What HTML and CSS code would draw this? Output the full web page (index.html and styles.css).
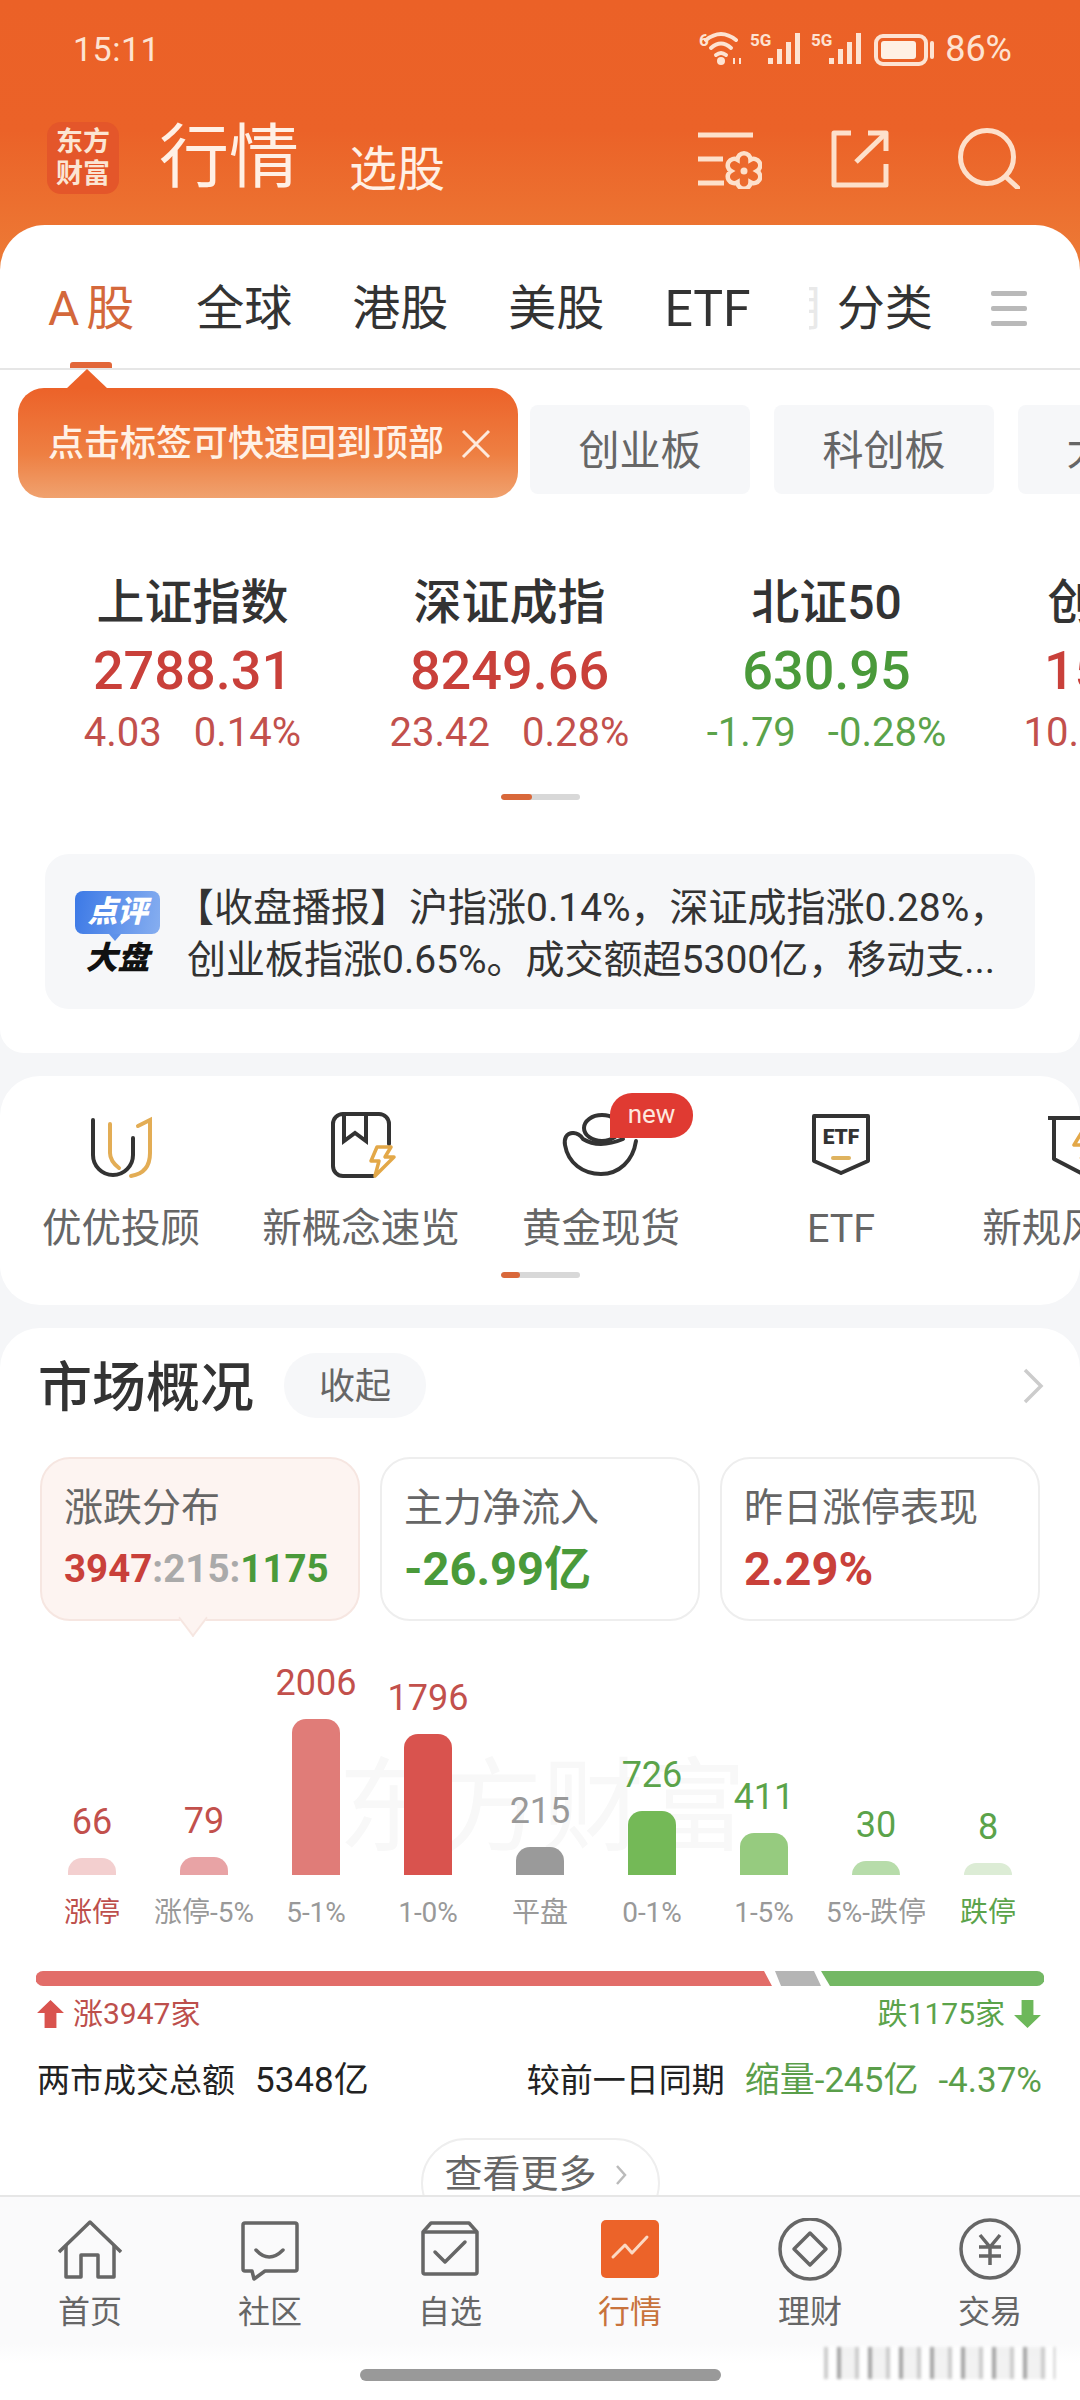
FILE: index.html
```html
<!DOCTYPE html>
<html lang="zh-CN">
<head>
  <meta charset="UTF-8">
  <meta name="viewport" content="width=device-width, initial-scale=1.0">
  <title>行情</title>
  <link rel="stylesheet" href="styles.css">
</head>
<body>
<div class="page">
  <div class="scroll">
    <div class="status">
      <span class="time">15:11</span>
      <div class="status-right">
        <svg class="status-icons" width="240" height="40" viewBox="0 0 240 40">
          <text class="st-txt" x="1" y="17">6</text>
          <g fill="none" stroke="#fde3d2" stroke-width="4" stroke-linecap="round">
            <path d="M8 11Q23-1 38 11"/>
            <path d="M13 19Q23 10 33 19"/>
            <path d="M18 26Q23 22 28 26"/>
          </g>
          <circle cx="23" cy="32" r="4" fill="#fde3d2"/>
          <path d="M36 29v6M42 29v6" stroke="#fde3d2" stroke-width="2"/>
          <text class="st-txt" x="52" y="17">5G</text>
          <g fill="#fde3d2">
            <rect x="70" y="29" width="5" height="6"/><rect x="79" y="20" width="5" height="15"/><rect x="88" y="13" width="5" height="22"/><rect x="97" y="4" width="5" height="31"/>
          </g>
          <text class="st-txt" x="113" y="17">5G</text>
          <g fill="#fde3d2">
            <rect x="131" y="29" width="5" height="6"/><rect x="140" y="20" width="5" height="15"/><rect x="149" y="13" width="5" height="22"/><rect x="158" y="4" width="5" height="31"/>
          </g>
          <rect x="178" y="7" width="50" height="28" rx="7" fill="none" stroke="#fde3d2" stroke-width="4"/>
          <rect x="183" y="12" width="35" height="18" rx="3" fill="#fff0e4"/>
          <rect x="232" y="12" width="4" height="18" rx="2" fill="#fde3d2"/>
        </svg>
        <span class="batt">86%</span>
      </div>
    </div>

    <div class="head">
      <div class="logo">东方<br>财富</div>
      <div class="head-title">行情</div>
      <div class="head-sub">选股</div>
      <div class="head-icons">
        <svg width="64" height="62" viewBox="0 0 64 62" fill="none" stroke="#fde0cb" stroke-width="5">
          <path d="M0 8H55M0 32H25M0 56H26"/>
          <path stroke-width="4.5" d="M59 44A6.5 6.5 0 0 1 52.5 55.26A6.5 6.5 0 0 1 39.5 55.26A6.5 6.5 0 0 1 33 44A6.5 6.5 0 0 1 39.5 32.74A6.5 6.5 0 0 1 52.5 32.74A6.5 6.5 0 0 1 59 44Z"/>
          <circle cx="46" cy="44" r="3.5" fill="#fde0cb" stroke="none"/>
        </svg>
        <svg width="58" height="62" viewBox="0 0 58 62" fill="none" stroke="#fde0cb" stroke-width="5" stroke-linejoin="round">
          <path d="M20 6H3V58H55V37"/>
          <path d="M25 35L54 7"/>
          <path d="M37 6H55V24"/>
        </svg>
        <svg width="62" height="62" viewBox="0 0 62 62" fill="none" stroke="#fde0cb" stroke-width="5" stroke-linecap="round">
          <circle cx="29" cy="30" r="26.5"/>
          <path d="M48 50L60 61"/>
        </svg>
      </div>
    </div>

    <div class="sheet">
      <div class="tabs">
        <div class="tab active"><span class="tab-a">A</span>股</div>
        <div class="tab">全球</div>
        <div class="tab">港股</div>
        <div class="tab">美股</div>
        <div class="tab tab-etf">ETF</div>
        <div class="tab-fade">期</div>
        <div class="tab tab-last">分类</div>
        <div class="tab-menu"><i></i><i></i><i></i></div>
      </div>

      <div class="chips-wrap">
        <div class="chips">
          <div class="chip">创业板</div>
          <div class="chip">科创板</div>
          <div class="chip">大盘股</div>
        </div>
        <div class="tip">
          <span>点击标签可快速回到顶部</span>
          <svg width="30" height="30" viewBox="0 0 30 30" stroke="#fdeadd" stroke-width="3" fill="none"><path d="M2 2L28 28M28 2L2 28"/></svg>
        </div>
      </div>

      <div class="indexes">
        <div class="idx">
          <div class="idx-name">上证指数</div>
          <div class="idx-price up">2788.31</div>
          <div class="idx-sub up-s"><span>4.03</span><span>0.14%</span></div>
        </div>
        <div class="idx">
          <div class="idx-name">深证成指</div>
          <div class="idx-price up">8249.66</div>
          <div class="idx-sub up-s"><span>23.42</span><span>0.28%</span></div>
        </div>
        <div class="idx">
          <div class="idx-name">北证50</div>
          <div class="idx-price down">630.95</div>
          <div class="idx-sub down-s"><span>-1.79</span><span>-0.28%</span></div>
        </div>
        <div class="idx">
          <div class="idx-name">创业板指</div>
          <div class="idx-price up">1590.72</div>
          <div class="idx-sub up-s"><span>10.28</span><span>0.65%</span></div>
        </div>
      </div>
      <div class="pager p1"><i></i></div>

      <div class="news">
        <div class="news-logo">
          <div class="bubble">点评</div>
          <div class="news-big">大盘</div>
        </div>
        <div class="news-txt"><span class="news-br">【</span>收盘播报】沪指涨0.14%，深证成指涨0.28%，<br>创业板指涨0.65%。成交额超5300亿，移动支...</div>
      </div>
    </div>

    <div class="card entry">
      <div class="entries">
        <div class="ent">
          <svg width="72" height="72" viewBox="0 0 72 72" fill="none" stroke-width="4" stroke-linecap="round">
            <path stroke="#333" d="M8 11V46A20 20 0 0 0 48 46V29"/>
            <path stroke="#e3ad55" d="M25 15V44Q25 52 34 59"/>
            <path stroke="#e3ad55" d="M53 17L65 11V44Q65 64 46 67"/>
          </svg>
          <div class="ent-name">优优投顾</div>
        </div>
        <div class="ent">
          <svg width="72" height="72" viewBox="0 0 72 72" fill="none" stroke-width="4" stroke-linecap="round">
            <path stroke="#333" d="M64 35V15A10 10 0 0 0 54 5H18A10 10 0 0 0 8 15V57A10 10 0 0 0 18 67H48"/>
            <path stroke="#333" d="M19 5V32L30 24L41 32V5"/>
            <path stroke="#e3a848" stroke-width="3.5" stroke-linejoin="round" d="M52 38H66L60 48H69L50 67L54 52H46Z"/>
          </svg>
          <div class="ent-name">新概念速览</div>
        </div>
        <div class="ent">
          <svg width="80" height="72" viewBox="0 0 80 72" fill="none" stroke="#333" stroke-width="4" stroke-linecap="round">
            <path d="M12 24C5 24 3 30 4 36C7 54 22 65 40 65C58 65 72 52 75 32"/>
            <path d="M12 24Q18 24 22 30Q38 40 62 30"/>
            <ellipse cx="41" cy="19" rx="18" ry="13"/>
          </svg>
          <span class="badge">new</span>
          <div class="ent-name">黄金现货</div>
        </div>
        <div class="ent">
          <svg width="72" height="72" viewBox="0 0 72 72" fill="none" stroke="#333" stroke-width="4" stroke-linejoin="round">
            <path d="M9 7H63V52L36 64L9 52Z"/>
            <text class="etf-txt" x="36" y="35">ETF</text>
            <path stroke="#dfb35f" stroke-linecap="round" d="M28 49H44"/>
          </svg>
          <div class="ent-name">ETF</div>
        </div>
        <div class="ent">
          <svg width="72" height="72" viewBox="0 0 72 72" fill="none" stroke="#333" stroke-width="4" stroke-linejoin="round">
            <path d="M3 9H69M9 9V50L36 64L63 50V9"/>
            <path stroke="#e3a848" stroke-width="3.5" d="M40 18L29 36H42L36 50"/>
          </svg>
          <div class="ent-name">新规风向标</div>
        </div>
      </div>
      <div class="pager p2"><i></i></div>
    </div>

    <div class="card market">
      <div class="mk-head">
        <div class="mk-title">市场概况</div>
        <div class="mk-pill">收起</div>
        <svg class="mk-arrow" width="22" height="36" viewBox="0 0 22 36" fill="none" stroke="#ccc" stroke-width="3.5"><path d="M3 2L19 18L3 34"/></svg>
      </div>

      <div class="stats">
        <div class="stat on">
          <div class="stat-name">涨跌分布</div>
          <div class="stat-val small"><span class="r">3947</span><span class="g">:215:</span><span class="n">1175</span></div>
        </div>
        <div class="stat">
          <div class="stat-name">主力净流入</div>
          <div class="stat-val n">-26.99亿</div>
        </div>
        <div class="stat">
          <div class="stat-name">昨日涨停表现</div>
          <div class="stat-val r">2.29%</div>
        </div>
      </div>

      <div class="chart">
        <div class="wm">东方财富</div>
        <div class="col"><div class="v vr">66</div><div class="bar b1" style="height:17px"></div><div class="l lr">涨停</div></div>
        <div class="col"><div class="v vr">79</div><div class="bar b2" style="height:18px"></div><div class="l">涨停-5%</div></div>
        <div class="col"><div class="v vr">2006</div><div class="bar b3" style="height:156px"></div><div class="l">5-1%</div></div>
        <div class="col"><div class="v vr">1796</div><div class="bar b4" style="height:141px"></div><div class="l">1-0%</div></div>
        <div class="col"><div class="v vn">215</div><div class="bar b5" style="height:28px"></div><div class="l">平盘</div></div>
        <div class="col"><div class="v vg">726</div><div class="bar b6" style="height:64px"></div><div class="l">0-1%</div></div>
        <div class="col"><div class="v vg">411</div><div class="bar b7" style="height:42px"></div><div class="l">1-5%</div></div>
        <div class="col"><div class="v vg">30</div><div class="bar b8" style="height:14px"></div><div class="l">5%-跌停</div></div>
        <div class="col"><div class="v vg">8</div><div class="bar b9" style="height:12px"></div><div class="l lg">跌停</div></div>
      </div>

      <svg class="split" width="1008" height="15" viewBox="0 0 1008 15">
        <path fill="#e26d69" d="M7 0H728L736 15H7A7 7 0 0 1 7 0Z"/>
        <path fill="#b5b5b5" d="M739 0H778L785 15H745Z"/>
        <path fill="#74b864" d="M785 0H1001A7 7 0 0 1 1001 15H794Z"/>
      </svg>

      <div class="legend">
        <div class="leg lr">
          <svg width="27" height="28" viewBox="0 0 25 26" fill="#d9534e"><path d="M12.5 0L25 12H18V26H7V12H0Z"/></svg>
          <span>涨3947家</span>
        </div>
        <div class="leg lg">
          <span>跌1175家</span>
          <svg width="27" height="28" viewBox="0 0 25 26" fill="#6db85a"><path d="M12.5 26L25 14H18V0H7V14H0Z"/></svg>
        </div>
      </div>

      <div class="turnover">
        <div>两市成交总额<span class="gap big">5348亿</span></div>
        <div>较前一日同期<span class="gap big tg">缩量-245亿</span><span class="gap big tg">-4.37%</span></div>
      </div>

      <div class="more">
        <span>查看更多</span>
        <svg width="12" height="22" viewBox="0 0 12 22" fill="none" stroke="#bbb" stroke-width="2.5"><path d="M2 2L10 11L2 20"/></svg>
      </div>
    </div>
  </div>

  <div class="nav">
    <div class="nav-row">
      <div class="nav-item">
        <svg width="64" height="64" viewBox="0 0 64 64" fill="none" stroke="#666" stroke-width="3.5" stroke-linejoin="round">
          <path d="M1 34L32 4L63 34"/>
          <path d="M8 27V59H23V37H40V59H56V27"/>
        </svg>
        <div>首页</div>
      </div>
      <div class="nav-item">
        <svg width="64" height="64" viewBox="0 0 64 64" fill="none" stroke="#666" stroke-width="3.5" stroke-linejoin="round">
          <path d="M7 5H57Q59 5 59 7V51Q59 53 57 53H27L16 61L14 53H7Q5 53 5 51V7Q5 5 7 5Z"/>
          <path d="M18 32Q31 46 45 32" stroke-linecap="round"/>
        </svg>
        <div>社区</div>
      </div>
      <div class="nav-item">
        <svg width="64" height="64" viewBox="0 0 64 64" fill="none" stroke="#666" stroke-width="3.5" stroke-linejoin="round">
          <path d="M13 5H51L59 14V54Q59 56 57 56H7Q5 56 5 54V14Z"/>
          <path d="M5 14H59"/>
          <path d="M17 34L27 44L47 24" stroke-linecap="round"/>
        </svg>
        <div>自选</div>
      </div>
      <div class="nav-item on">
        <svg width="64" height="64" viewBox="0 0 64 64" fill="none">
          <rect x="3" y="2" width="58" height="58" rx="5" fill="#ec6329"/>
          <path d="M15 39L27 27L34 35L49 19" stroke="#fcd9c3" stroke-width="3" stroke-linecap="round" stroke-linejoin="round"/>
        </svg>
        <div>行情</div>
      </div>
      <div class="nav-item">
        <svg width="64" height="64" viewBox="0 0 64 64" fill="none" stroke="#666" stroke-width="3.5" stroke-linejoin="round">
          <circle cx="32" cy="31" r="30"/>
          <path d="M32 15L48 31L32 47L16 31Z"/>
        </svg>
        <div>理财</div>
      </div>
      <div class="nav-item">
        <svg width="64" height="64" viewBox="0 0 64 64" fill="none" stroke="#666" stroke-width="3.5">
          <circle cx="32" cy="31" r="29"/>
          <path d="M22 17L32 29L42 17M21 29H43M21 38H43M32 29V47"/>
        </svg>
        <div>交易</div>
      </div>
    </div>
    <div class="home-bar"></div>
    <div class="smear"></div>
  </div>
</div>
</body>
</html>
```

FILE: styles.css
```css
* {
  box-sizing: border-box;
}
body {
  margin: 0;
  font-family: Roboto, "Noto Sans CJK SC", sans-serif;
  color: #333;
}
.page {
  width: 1080px;
  height: 2400px;
  display: flex;
  flex-direction: column;
  overflow: hidden;
  position: relative;
  background: #f5f6f8;
}
.scroll {
  flex: 1;
  min-height: 0;
  overflow: hidden;
  background: linear-gradient(#eb6127 0, #eb6228 130px, #ed7d37 280px) top / 100% 280px no-repeat;
}

/* status bar */
.status {
  height: 98px;
  display: flex;
  align-items: center;
  justify-content: space-between;
  padding: 0 68px 0 73px;
  color: #fde3d2;
}
.time {
  font-size: 34px;
  letter-spacing: 0.5px;
}
.status-right {
  display: flex;
  align-items: center;
  gap: 7px;
}
.st-txt {
  font-size: 17px;
  font-weight: 700;
  fill: #fde3d2;
}
.batt {
  font-size: 36px;
  line-height: 40px;
}

/* header */
.head {
  height: 127px;
  display: flex;
  align-items: center;
  padding: 0 60px 7px 47px;
  color: #fff0e5;
}
.logo {
  width: 72px;
  height: 72px;
  border-radius: 14px;
  background: #e4562a;
  color: #fbe5d3;
  font-size: 27px;
  line-height: 32px;
  font-weight: 700;
  text-align: center;
  padding-top: 4px;
  margin-right: 40px;
}
.head-title {
  font-size: 70px;
  line-height: 80px;
  margin-right: 50px;
}
.head-sub {
  font-size: 48px;
  line-height: 56px;
  margin-top: 24px;
}
.head-icons {
  margin-left: auto;
  display: flex;
  align-items: center;
  gap: 69px;
}

/* white sheet */
.sheet {
  background: #fff;
  border-radius: 45px 45px 24px 24px;
  height: 828px;
}
.tabs {
  height: 145px;
  display: flex;
  align-items: flex-end;
  padding: 0 0 34px 48px;
  border-bottom: 2px solid #e6e6e6;
  font-size: 48px;
  line-height: 50px;
}
.tab {
  margin-right: 60px;
  position: relative;
  white-space: nowrap;
}
.tab-a {
  margin-right: 7px;
}
.tab.active {
  color: #d4683b;
  margin-right: 62px;
}
.tab.active::after {
  content: "";
  position: absolute;
  left: 22px;
  bottom: -34px;
  width: 42px;
  height: 6px;
  border-radius: 3px 3px 0 0;
  background: #e2673a;
}
.tab-etf {
  font-size: 50px;
  margin-right: 58px;
}
.tab-fade {
  width: 12px;
  margin-right: 16px;
  overflow: hidden;
  color: #e9e9e9;
  white-space: nowrap;
  text-indent: -36px;
}
.tab-last {
  margin-right: 58px;
}
.tab-menu {
  margin-bottom: 8px;
  width: 36px;
  display: flex;
  flex-direction: column;
  gap: 10px;
}
.tab-menu i {
  display: block;
  height: 5px;
  border-radius: 2px;
  background: #b9b9b9;
}

/* chips and the hint over them */
.chips-wrap {
  position: relative;
  padding-top: 35px;
}
.chips {
  display: flex;
  gap: 24px;
  padding-left: 530px;
  overflow: hidden;
}
.chip {
  flex: none;
  width: 220px;
  height: 89px;
  padding-top: 4px;
  border-radius: 8px;
  background: #f6f7f9;
  color: #666;
  font-size: 41px;
  line-height: 85px;
  text-align: center;
}
.tip {
  position: absolute;
  left: 18px;
  top: 18px;
  width: 500px;
  height: 110px;
  border-radius: 26px;
  background: linear-gradient(#ec6229, #ee7f42 60%, #f0a26f);
  color: #fff1e6;
  font-size: 36px;
  font-weight: 500;
  line-height: 44px;
  display: flex;
  align-items: center;
  padding: 2px 0 0 30px;
  gap: 17px;
  white-space: nowrap;
}
.tip::before {
  content: "";
  position: absolute;
  left: 48px;
  top: -19px;
  border-left: 21px solid transparent;
  border-right: 21px solid transparent;
  border-bottom: 20px solid #ec6229;
}

/* index row */
.indexes {
  display: flex;
  margin-top: 81px;
  padding-left: 34px;
  overflow: hidden;
  white-space: nowrap;
}
.idx {
  flex: none;
  width: 317px;
  text-align: center;
}
.idx-name {
  font-size: 48px;
  line-height: 56px;
  font-weight: 500;
}
.idx-price {
  font-size: 54px;
  line-height: 60px;
  font-weight: 500;
  margin-top: 10px;
}
.idx-sub {
  font-size: 40px;
  line-height: 44px;
  margin-top: 10px;
  display: flex;
  justify-content: center;
  gap: 32px;
}
.up {
  color: #c9403a;
}
.down {
  color: #4a9a3a;
}
.up-s {
  color: #c2504c;
}
.down-s {
  color: #5ba34a;
}
.pager {
  width: 79px;
  height: 6px;
  margin: 0 auto;
  border-radius: 3px;
  background: #d8d8d8;
  overflow: hidden;
}
.pager i {
  display: block;
  height: 6px;
  border-radius: 3px;
  background: #d9683a;
}
.p1 {
  margin-top: 39px;
}
.p1 i {
  width: 31px;
}
.p2 {
  margin-top: 18px;
}
.p2 i {
  width: 19px;
}

/* news box */
.news {
  margin: 54px 45px 0 45px;
  height: 155px;
  border-radius: 24px;
  background: #f6f7f9;
  display: flex;
  align-items: center;
  padding: 0 30px;
  gap: 27px;
}
.news-logo {
  width: 85px;
  flex: none;
  text-align: center;
  margin-top: 4px;
}
.bubble {
  height: 43px;
  border-radius: 8px;
  background: linear-gradient(100deg, #3c79e6, #86aef0);
  color: #fff;
  font-size: 30px;
  line-height: 42px;
  font-weight: 900;
  font-style: italic;
  position: relative;
}
.bubble::after {
  content: "";
  position: absolute;
  left: 34px;
  bottom: -7px;
  border-left: 6px solid transparent;
  border-right: 6px solid transparent;
  border-top: 7px solid #5e92ea;
}
.news-big {
  color: #111;
  font-size: 32px;
  line-height: 36px;
  font-weight: 900;
  font-style: italic;
  margin-top: 6px;
}
.news-txt {
  font-size: 39px;
  line-height: 52px;
  padding-top: 4px;
  white-space: nowrap;
  color: #333;
}
.news-br {
  margin-left: -12px;
}

/* cards */
.card {
  background: #fff;
  border-radius: 40px;
}
.entry {
  margin-top: 23px;
  height: 229px;
  padding-top: 33px;
}
.entries {
  display: flex;
  padding-left: 1px;
  white-space: nowrap;
}
.ent {
  flex: none;
  width: 240px;
  display: flex;
  flex-direction: column;
  align-items: center;
  position: relative;
}
.ent-name {
  font-size: 39.5px;
  line-height: 50px;
  margin-top: 23px;
  color: #666;
}
.badge {
  position: absolute;
  left: 129px;
  top: -16px;
  width: 83px;
  height: 45px;
  border-radius: 22px 22px 22px 0;
  background: #e03a32;
  color: #fde8df;
  font-size: 26px;
  line-height: 43px;
  text-align: center;
}
.etf-txt {
  font-size: 21px;
  font-weight: 900;
  fill: #333;
  stroke: none;
  text-anchor: middle;
}

/* market overview */
.market {
  margin-top: 23px;
  height: 1000px;
  padding-top: 25px;
}
.mk-head {
  display: flex;
  align-items: center;
  height: 65px;
  padding: 0 36px 0 38px;
}
.mk-title {
  font-size: 54px;
  line-height: 60px;
  font-weight: 500;
  padding-top: 6px;
  height: 66px;
}
.mk-pill {
  width: 142px;
  height: 65px;
  margin-left: 30px;
  padding-top: 4px;
  border-radius: 32px;
  background: #f6f7f9;
  color: #666;
  font-size: 36px;
  line-height: 61px;
  text-align: center;
}
.mk-arrow {
  margin-left: auto;
}
.stats {
  display: grid;
  grid-template-columns: repeat(3, 320px);
  gap: 20px;
  padding-left: 40px;
  margin-top: 39px;
}
.stat {
  height: 164px;
  border: 2px solid #eee;
  border-radius: 30px;
  padding: 27px 0 0 22px;
  position: relative;
}
.stat.on {
  background: #fdf4f1;
  border-color: #f6e6e1;
}
.stat.on::after {
  content: "";
  position: absolute;
  left: 139px;
  bottom: -11px;
  width: 22px;
  height: 22px;
  background: #fdf4f1;
  border-right: 2px solid #f6e6e1;
  border-bottom: 2px solid #f6e6e1;
  transform: rotate(45deg) skew(8deg, 8deg);
}
.stat-name {
  font-size: 39px;
  line-height: 44px;
  color: #666;
}
.stat-val {
  font-size: 47px;
  line-height: 50px;
  font-weight: 700;
  margin-top: 14px;
}
.stat-val.small {
  font-size: 38.5px;
}
.r {
  color: #c9403a;
}
.n {
  color: #4a9a3a;
}
.g {
  color: #aaa;
}

/* distribution chart */
.chart {
  position: relative;
  display: flex;
  align-items: flex-end;
  height: 271px;
  margin-top: 39px;
  padding-left: 36px;
}
.wm {
  position: absolute;
  left: 338px;
  top: 88px;
  font-size: 102px;
  line-height: 120px;
  color: #f8f8f8;
  white-space: nowrap;
}
.col {
  flex: none;
  width: 112px;
  position: relative;
  display: flex;
  flex-direction: column;
  align-items: center;
}
.v {
  font-size: 36px;
  line-height: 44px;
  margin-bottom: 14px;
}
.vr {
  color: #c2504c;
}
.vn {
  color: #999;
}
.vg {
  color: #5ba34a;
}
.bar {
  width: 48px;
  border-radius: 14px 14px 0 0;
}
.b1 {
  background: #f3cfcf;
}
.b2 {
  background: #e8a3a5;
}
.b3 {
  background: #e07c78;
}
.b4 {
  background: #d9534e;
}
.b5 {
  background: #9a9a9a;
}
.b6 {
  background: #74b957;
}
.b7 {
  background: #96cb7f;
}
.b8 {
  background: #b7dcaa;
}
.b9 {
  background: #dcecd5;
}
.l {
  font-size: 28px;
  line-height: 36px;
  margin-top: 20px;
  color: #999;
  white-space: nowrap;
}
.lr {
  color: #bd4f4c;
}
.lg {
  color: #5ba34a;
}
.split {
  display: block;
  margin: 40px 0 0 36px;
}
.legend {
  display: flex;
  justify-content: space-between;
  padding: 0 39px 0 37px;
  margin-top: 10px;
  font-size: 30px;
  line-height: 36px;
}
.leg {
  display: flex;
  align-items: center;
  gap: 9px;
}
.turnover {
  display: flex;
  justify-content: space-between;
  padding: 0 38px 0 37px;
  margin-top: 27px;
  font-size: 33px;
  line-height: 44px;
  color: #222;
}
.gap {
  margin-left: 20px;
}
.big {
  font-size: 35px;
}
.tg {
  color: #5a9e4a;
}
.more {
  width: 239px;
  height: 90px;
  margin: 35px auto 0;
  border: 2px solid #eee;
  border-radius: 45px;
  display: flex;
  align-items: flex-start;
  gap: 18px;
  padding: 11px 0 0 22px;
  color: #666;
  font-size: 38px;
  line-height: 46px;
  white-space: nowrap;
}
.more svg {
  margin-top: 13px;
}

/* bottom nav */
.nav {
  flex: none;
  height: 205px;
  border-top: 2px solid #e6e6e6;
  background: linear-gradient(#fafafb 0, #fafafb 72%, #fff 82%);
  position: relative;
}
.nav-row {
  display: grid;
  grid-template-columns: repeat(6, 180px);
  padding-top: 21px;
}
.nav-item {
  display: flex;
  flex-direction: column;
  align-items: center;
  font-size: 32px;
  line-height: 44px;
  color: #666;
}
.nav-item svg {
  margin-bottom: 8px;
}
.nav-item.on {
  color: #c8733c;
}
.home-bar {
  width: 361px;
  height: 12px;
  margin: 35px auto 0;
  border-radius: 6px;
  background: #999;
}
.smear {
  position: absolute;
  left: 824px;
  top: 150px;
  width: 231px;
  height: 32px;
  background: repeating-linear-gradient(90deg, #bbb 0 4px, #fff 4px 13px, #888 13px 17px, #eee 17px 31px);
  filter: blur(1.5px);
  opacity: 0.75;
}
```
